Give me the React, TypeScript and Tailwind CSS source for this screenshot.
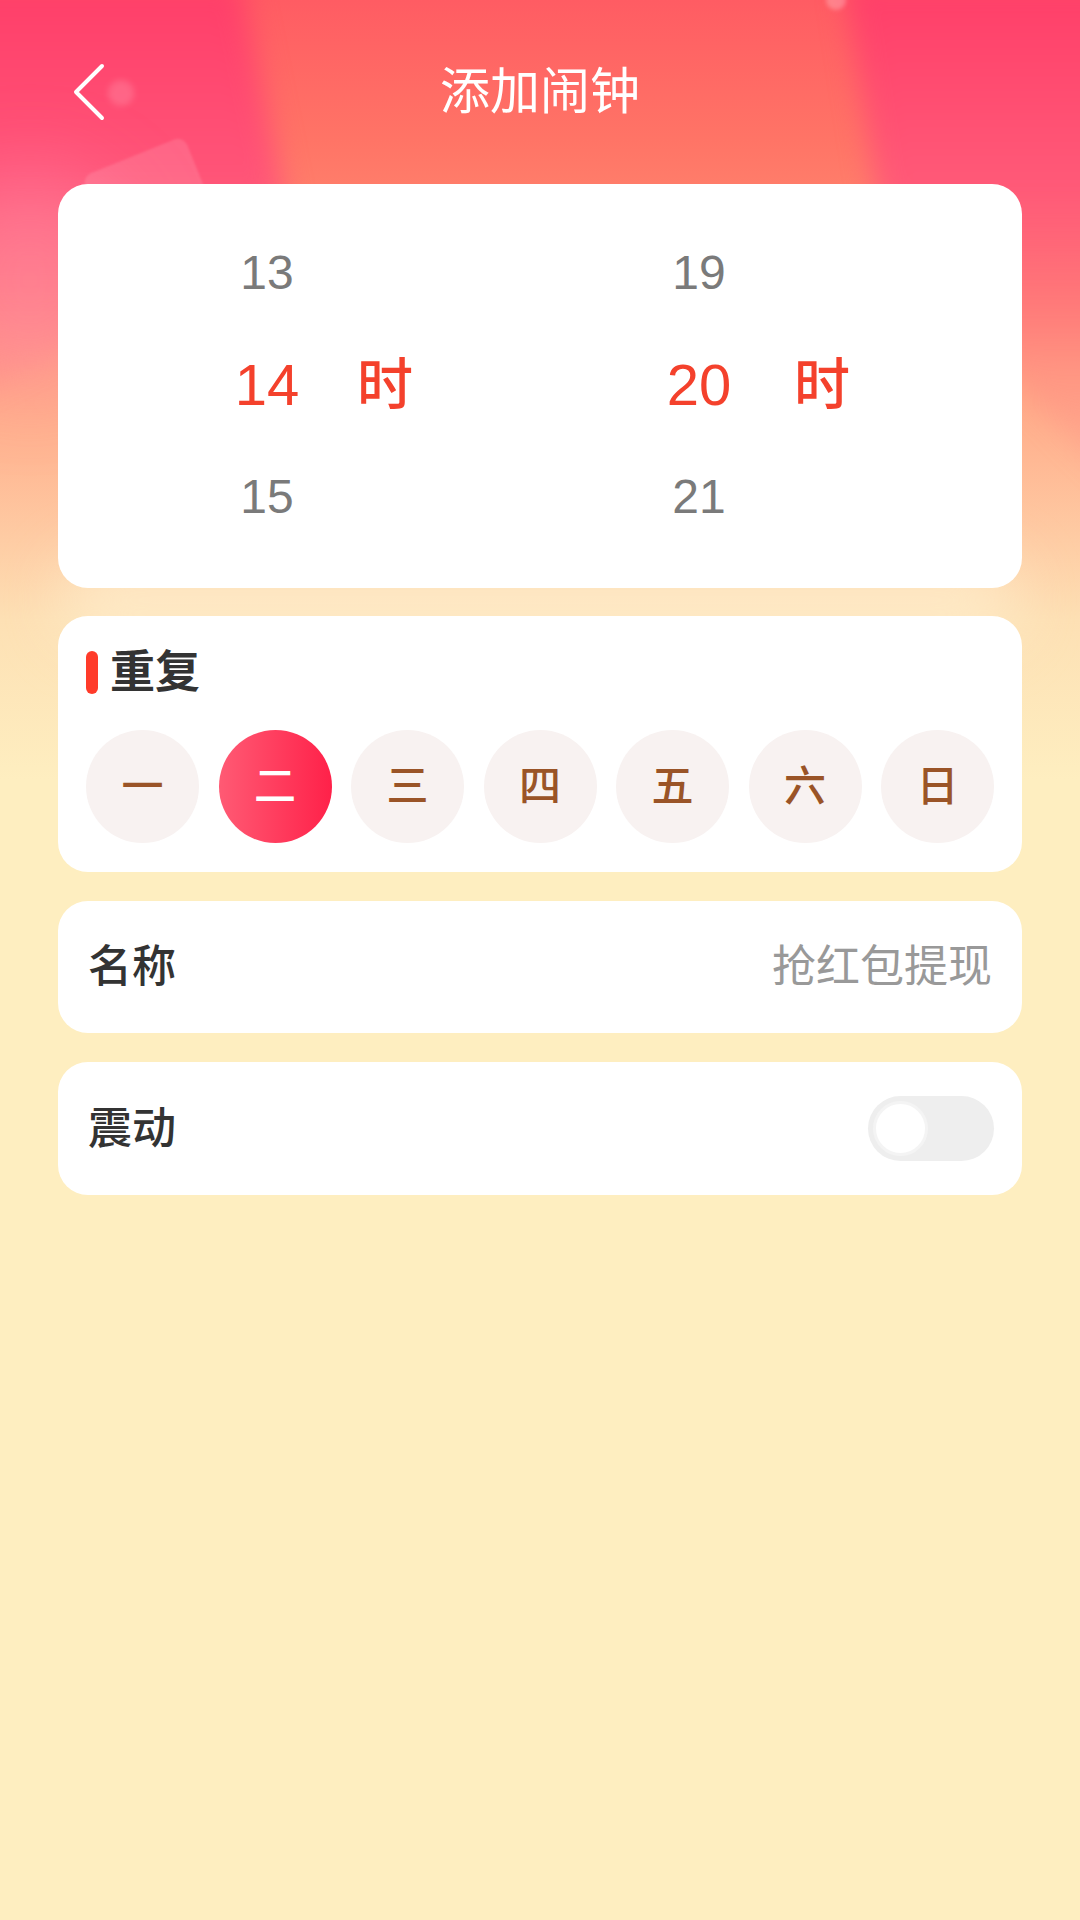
import React, { useState } from 'react';

const DAYS = ['一', '二', '三', '四', '五', '六', '日'];

function BackIcon() {
  return (
    <svg width="34" height="58" viewBox="0 0 34 58" fill="none">
      <path
        d="M30 3 L4 29 L30 55"
        stroke="#ffffff"
        strokeWidth="4"
        strokeLinecap="round"
        strokeLinejoin="round"
      />
    </svg>
  );
}

function Background() {
  return (
    <div className="pointer-events-none absolute inset-x-0 top-0 h-[780px] overflow-hidden">
      {/* base wash */}
      <div className="absolute inset-0 bg-[linear-gradient(180deg,#ff5c63_0px,#ff7466_140px,#ff9274_300px,#ffb894_460px,#fde0b4_620px,#feeec0_780px)]" />
      {/* left pink ray */}
      <div className="absolute left-0 top-0 h-[600px] w-[420px] blur-[14px]">
        <div className="absolute left-[-40px] top-[-20px] h-[560px] w-[360px] [clip-path:polygon(0_0,78%_0,92%_45%,0_75%)] bg-[linear-gradient(180deg,#ff3d68_0%,#ff5478_35%,rgba(255,120,130,0.35)_65%,rgba(255,150,140,0)_90%)]" />
      </div>
      {/* right pink ray */}
      <div className="absolute right-0 top-0 h-[640px] w-[360px] blur-[14px]">
        <div className="absolute right-[-40px] top-[-20px] h-[600px] w-[300px] [clip-path:polygon(8%_0,100%_0,100%_85%,22%_45%)] bg-[linear-gradient(180deg,#ff3d68_0%,#ff5a78_35%,rgba(255,130,130,0.4)_65%,rgba(255,150,140,0)_95%)]" />
      </div>
      {/* soft glow top-left */}
      <div className="absolute left-[-70px] top-[170px] h-[220px] w-[200px] rounded-full bg-[#ff8fae]/45 blur-[40px]" />
      {/* faint tilted card */}
      <div className="absolute left-[100px] top-[152px] h-[120px] w-[110px] rotate-[-22deg] rounded-[10px] bg-white/12 blur-[1px]" />
      {/* bubbles */}
      <div className="absolute left-[108px] top-[80px] h-[26px] w-[26px] rounded-full bg-white/15 blur-[3px]" />
      <div className="absolute left-[826px] top-[-10px] h-[20px] w-[20px] rounded-full bg-white/25 blur-[2px]" />
      {/* glow behind first card */}
      <div className="absolute left-[60px] top-[560px] h-[80px] w-[960px] rounded-full bg-[#fff3d6]/60 blur-[30px]" />
    </div>
  );
}

function Wheel({
  values,
  selected,
  labelGap,
}: {
  values: number[];
  selected: number;
  labelGap: string;
}) {
  return (
    <div className="flex flex-col">
      {values.map((v) => (
        <div key={v} className="flex h-[112px] items-center">
          <span
            className={
              v === selected
                ? 'w-[120px] text-center text-[58px] leading-none text-[#f4412c]'
                : 'w-[120px] text-center text-[48px] leading-none text-[#7a7a7a]'
            }
          >
            {v}
          </span>
          {v === selected && (
            <span
              className={`${labelGap} text-[56px] font-medium leading-none text-[#f4412c]`}
            >
              时
            </span>
          )}
        </div>
      ))}
    </div>
  );
}

export default function App() {
  const [day, setDay] = useState(1);
  const [vibrate, setVibrate] = useState(false);

  return (
    <div className="relative min-h-[1920px] w-[1080px] overflow-hidden bg-[#feeec0] font-['Liberation_Sans','Noto_Sans_CJK_SC',sans-serif]">
      <Background />

      <div className="relative">
        {/* Header */}
        <div className="grid h-[184px] grid-cols-[1fr_auto_1fr] items-center">
          <div className="pl-[72px]">
            <button type="button" className="flex items-center">
              <BackIcon />
            </button>
          </div>
          <h1 className="text-[50px] font-normal leading-none text-white">
            添加闹钟
          </h1>
          <div />
        </div>

        {/* Time picker */}
        <div className="mx-[58px] flex h-[404px] rounded-[30px] bg-white pt-[33px]">
          <div className="ml-[149px]">
            <Wheel values={[13, 14, 15]} selected={14} labelGap="ml-[30px]" />
          </div>
          <div className="ml-[226px]">
            <Wheel values={[19, 20, 21]} selected={20} labelGap="ml-[35px]" />
          </div>
        </div>

        {/* Repeat */}
        <div className="mx-[58px] mt-[28px] h-[256px] rounded-[30px] bg-white px-[28px] pt-[34px]">
          <div className="flex h-[44px] items-center">
            <span className="h-[43px] w-[12px] rounded-full bg-[#ff3b2a]" />
            <span className="ml-[12px] text-[45px] font-bold leading-none text-[#333333]">
              重复
            </span>
          </div>
          <div className="mt-[36px] flex justify-between">
            {DAYS.map((d, i) => (
              <button
                key={d}
                type="button"
                onClick={() => setDay(i)}
                className={
                  i === day
                    ? 'flex h-[113px] w-[113px] items-center justify-center rounded-full bg-[linear-gradient(90deg,#ff5a74,#ff2149)] text-[42px] font-medium text-white'
                    : 'flex h-[113px] w-[113px] items-center justify-center rounded-full bg-[#f8f2f1] text-[42px] font-medium text-[#9a5427]'
                }
              >
                {d}
              </button>
            ))}
          </div>
        </div>

        {/* Name */}
        <div className="mx-[58px] mt-[29px] flex h-[132px] items-center justify-between rounded-[30px] bg-white px-[30px]">
          <span className="text-[44px] font-medium text-[#333333]">名称</span>
          <span className="text-[44px] text-[#999999]">抢红包提现</span>
        </div>

        {/* Vibrate */}
        <div className="mx-[58px] mt-[29px] flex h-[133px] items-center justify-between rounded-[30px] bg-white pl-[30px] pr-[28px]">
          <span className="text-[44px] font-medium text-[#333333]">震动</span>
          <button
            type="button"
            onClick={() => setVibrate((v) => !v)}
            className={
              vibrate
                ? 'flex h-[65px] w-[126px] items-center justify-end rounded-full bg-[#ff3b4f] p-[5px]'
                : 'flex h-[65px] w-[126px] items-center justify-start rounded-full bg-[#eeeeee] p-[5px]'
            }
          >
            <span className="h-[55px] w-[55px] rounded-full border-[3px] border-[#f4f4f4] bg-white" />
          </button>
        </div>
      </div>
    </div>
  );
}
